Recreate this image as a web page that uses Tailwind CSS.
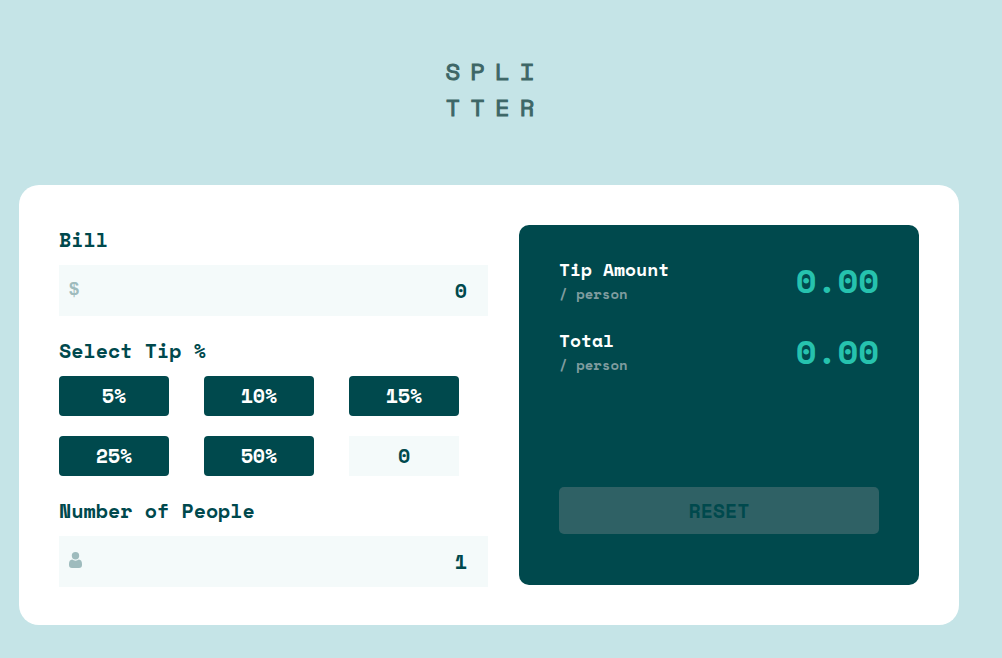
<!DOCTYPE html>
<html lang="en">
<head>
<meta charset="utf-8">
<meta name="viewport" content="width=device-width, initial-scale=1">
<title>Splitter</title>
<script src="https://cdn.jsdelivr.net/npm/@tailwindcss/browser@4"></script>
</head>
<body class="min-h-screen bg-[#c5e4e7] pt-[53px] pr-[43px] pb-8 pl-[19px] font-['Space_Mono','Liberation_Mono',monospace] text-xl font-bold text-[#00494d]">
  <h1 class="pl-3 text-center text-2xl font-normal leading-9 tracking-[10px] text-[#3d6666] [-webkit-text-stroke:1px]">SPLI<br>TTER</h1>
  <main class="mx-auto mt-[60px] flex max-w-[1100px] items-start gap-[31px] rounded-[20px] bg-white px-10 pt-10 pb-[38px]">
    <form class="flex min-w-0 flex-1 flex-col gap-5">
      <div class="flex flex-col gap-2.5">
        <label for="bill" class="leading-[30px]">Bill</label>
        <div class="relative">
          <span class="absolute inset-y-0 left-2.5 flex items-center pb-1 font-['Liberation_Sans',sans-serif] text-lg text-[#9ebbbd]">$</span>
          <input id="bill" type="text" inputmode="decimal" value="0" class="h-[51px] w-full bg-[#f4fafa] pr-[21px] pl-10 text-right outline-none">
        </div>
      </div>
      <fieldset class="min-w-0">
        <legend class="mb-2.5 leading-[30px]">Select Tip %</legend>
        <div class="grid grid-cols-3 gap-x-[35px] gap-y-5 pr-[29px]">
          <button type="button" class="h-10 rounded bg-[#00494d] text-white">5%</button>
          <button type="button" class="h-10 rounded bg-[#00494d] text-white">10%</button>
          <button type="button" class="h-10 rounded bg-[#00494d] text-white">15%</button>
          <button type="button" class="h-10 rounded bg-[#00494d] text-white">25%</button>
          <button type="button" class="h-10 rounded bg-[#00494d] text-white">50%</button>
          <input type="text" inputmode="decimal" value="0" aria-label="Custom tip" class="h-10 w-full min-w-0 bg-[#f4fafa] pb-0.5 text-center outline-none">
        </div>
      </fieldset>
      <div class="flex flex-col gap-2.5">
        <label for="people" class="leading-[30px]">Number of People</label>
        <div class="relative">
          <span class="absolute inset-y-0 left-2.5 flex items-center pb-1">
            <svg class="h-4 w-[13px]" viewBox="0 0 13 16" fill="#9ebbbd" aria-hidden="true"><circle cx="6.5" cy="3.700" r="3.700"/><path d="M3.100 7.600C4 8.300 5.200 8.700 6.500 8.700s2.500-.4 3.400-1.100c2 .2 3.100 1.800 3.100 4.400v1c0 2-1 3-3 3H3c-2 0-3-1-3-3v-1c0-2.600 1.100-4.200 3.100-4.400z"/></svg>
          </span>
          <input id="people" type="text" inputmode="numeric" value="1" class="h-[51px] w-full bg-[#f4fafa] pr-[21px] pl-10 text-right outline-none">
        </div>
      </div>
    </form>
    <section class="flex min-h-[360px] min-w-0 flex-[0_1_400px] flex-col rounded-[10px] bg-[#00494d] px-10 pt-[31px] pb-[51px]">
      <div class="flex items-center justify-between">
        <div>
          <h2 class="text-lg leading-[27px] text-white">Tip Amount</h2>
          <p class="text-sm leading-[21px] text-[#7f9c9f]">/ person</p>
        </div>
        <output class="text-[34px] leading-[48px] text-[#26c2ae]">0.00</output>
      </div>
      <div class="mt-[23px] flex items-center justify-between">
        <div>
          <h2 class="text-lg leading-[27px] text-white">Total</h2>
          <p class="text-sm leading-[21px] text-[#7f9c9f]">/ person</p>
        </div>
        <output class="text-[34px] leading-[48px] text-[#26c2ae]">0.00</output>
      </div>
      <button type="button" class="mt-auto h-[47px] w-full rounded-[5px] bg-[#2f6165] text-[#00494d]">RESET</button>
    </section>
  </main>
</body>
</html>
